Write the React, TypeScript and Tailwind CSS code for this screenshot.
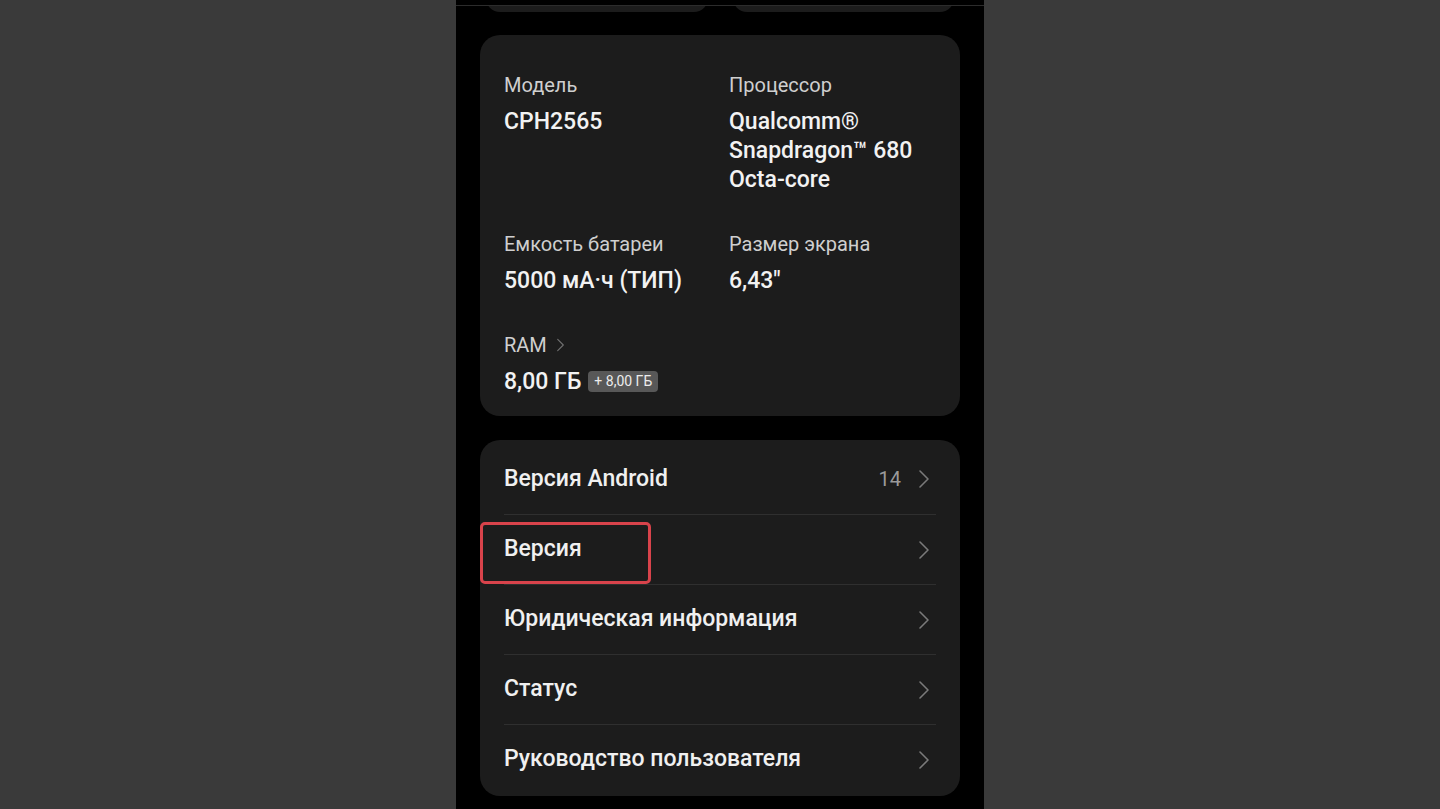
import type { ReactNode } from 'react';

function Chevron({ className = '' }: { className?: string }) {
  return (
    <svg viewBox="0 0 12 20" className={className} fill="none" stroke="currentColor" strokeWidth="1.6" strokeLinecap="round" strokeLinejoin="round">
      <polyline points="2,2 10,10 2,18" />
    </svg>
  );
}

function Spec({ label, children, arrow }: { label: string; children: ReactNode; arrow?: boolean }) {
  return (
    <div>
      <div className="flex items-center gap-[9px] text-[20px] leading-[26px] text-[#cfcfcf]">
        {label}
        {arrow && <Chevron className="h-[14px] w-[9px] text-[#707070]" />}
      </div>
      <div className="mt-[9px] text-[23px] font-medium leading-[29px] text-[#f2f2f2]">{children}</div>
    </div>
  );
}

const rows = [
  { title: 'Версия Android', value: '14' },
  { title: 'Версия' },
  { title: 'Юридическая информация' },
  { title: 'Статус' },
  { title: 'Руководство пользователя' },
];

export default function App() {
  return (
    <div
      className="flex h-[809px] justify-center overflow-hidden bg-[#3a3a3a]"
      style={{ fontFamily: 'Roboto, "Noto Sans", sans-serif' }}
    >
      <div className="w-[528px] bg-black">
        <div className="h-[5px]" />
        <div className="h-px bg-[#2c2c2c]" />
        <div className="flex h-[6px] gap-[25px] overflow-hidden px-[30px]">
          <div className="-mt-[22px] h-[28px] flex-1 rounded-[22px] bg-[#1c1c1c]" />
          <div className="-mt-[22px] h-[28px] flex-1 rounded-[22px] bg-[#1c1c1c]" />
        </div>

        <div className="mx-6 mt-[23px] rounded-[20px] bg-[#1c1c1c] px-6 pb-[20px] pt-[37px]">
          <div className="grid grid-cols-[225px_1fr] gap-y-[37px]">
            <Spec label="Модель">CPH2565</Spec>
            <Spec label="Процессор">
              Qualcomm®
              <br />
              Snapdragon™ 680
              <br />
              Octa-core
            </Spec>
            <Spec label="Емкость батареи">5000 мА·ч (ТИП)</Spec>
            <Spec label="Размер экрана">6,43"</Spec>
            <Spec label="RAM" arrow>
              <span className="flex items-center">
                8,00 ГБ
                <span className="ml-[7px] rounded-[4px] bg-[#585858] px-[6px] text-[14px] font-normal leading-[21px] text-[#ececec]">
                  + 8,00 ГБ
                </span>
              </span>
            </Spec>
          </div>
        </div>

        <div className="relative mx-6 mt-6 rounded-[20px] bg-[#1c1c1c] px-6 pb-[2px] pt-[4px]">
          {rows.map((r, i) => (
            <div
              key={r.title}
              className={`flex h-[70px] items-center justify-between ${i > 0 ? 'border-t border-[#2f2f2f]' : ''}`}
            >
              <span className="text-[23px] font-medium text-[#f0f0f0]">{r.title}</span>
              <span className="flex items-center gap-[17px] pr-[6px]">
                {r.value && <span className="text-[20px] text-[#9a9a9a]">{r.value}</span>}
                <Chevron className="h-[20px] w-[12px] text-[#7a7a7a]" />
              </span>
            </div>
          ))}
          <div className="absolute left-0 top-[82px] h-[62px] w-[171px] rounded-[5px] border-[3px] border-[#d8434b]" />
        </div>
      </div>
    </div>
  );
}
